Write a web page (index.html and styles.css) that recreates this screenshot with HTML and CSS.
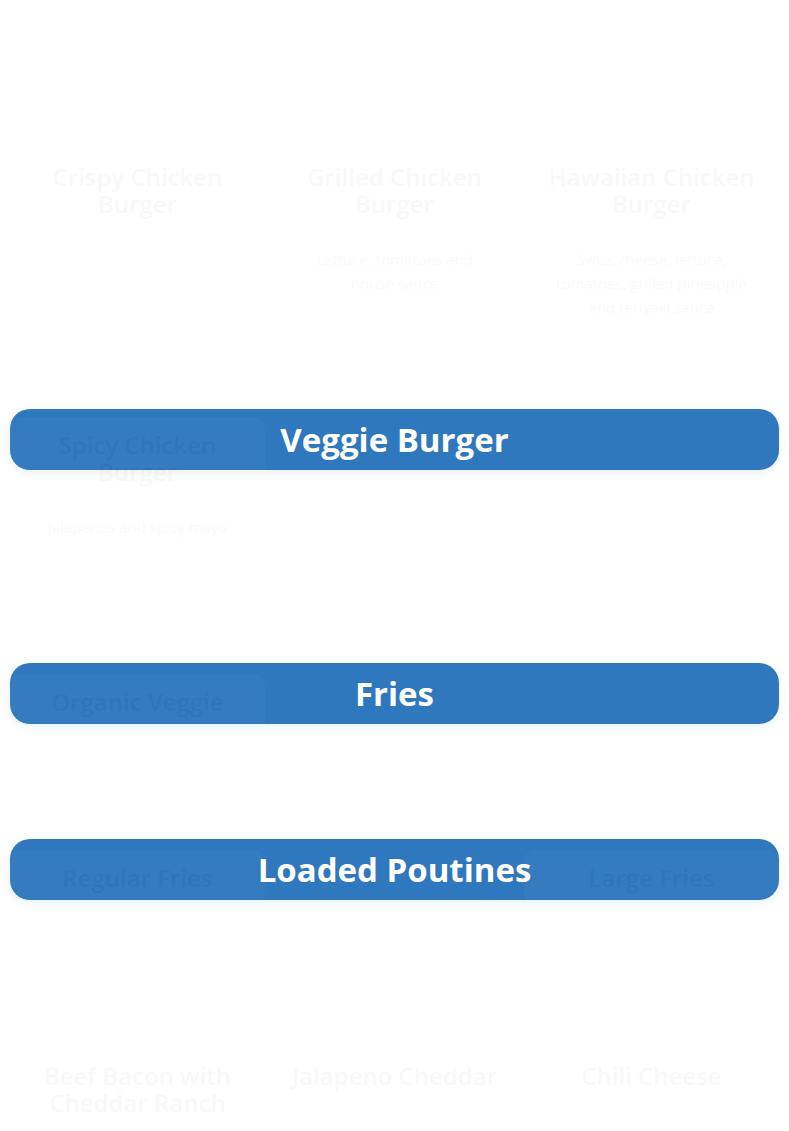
FILE: index.html
```html
<!DOCTYPE html>
<html lang="en">
<head>
    <meta charset="UTF-8">
    <meta name="viewport" content="width=device-width, initial-scale=1.0">
    <title>Menu</title>
    <link rel="stylesheet" href="styles.css">
</head>
<body>
    <div class="menu">

        <section class="menu-section first">
            <div class="menu-grid">
                <div class="item lag-a">
                    <h3 class="item-name">Crispy Chicken Burger</h3>
                    <p class="item-desc"></p>
                </div>
                <div class="item lag-a">
                    <h3 class="item-name">Grilled Chicken Burger</h3>
                    <p class="item-desc">Lettuce, tomatoes and house sauce</p>
                </div>
                <div class="item lag-a">
                    <h3 class="item-name">Hawaiian Chicken Burger</h3>
                    <p class="item-desc">Swiss cheese, lettuce, tomatoes, grilled pineapple and teriyaki sauce</p>
                </div>
                <div class="item lag-b">
                    <h3 class="item-name">Spicy Chicken Burger</h3>
                    <p class="item-desc">Jalapenos and spicy mayo</p>
                </div>
            </div>
        </section>

        <section class="menu-section">
            <h2 class="category">Veggie Burger</h2>
            <div class="menu-grid">
                <div class="item lag-b">
                    <h3 class="item-name">Organic Veggie</h3>
                    <p class="item-desc faded">Veggie patty, lettuce, tomatoes and onions</p>
                </div>
            </div>
        </section>

        <section class="menu-section">
            <h2 class="category">Fries</h2>
            <div class="menu-grid">
                <div class="item lag-c">
                    <h3 class="item-name">Regular Fries</h3>
                </div>
                <div class="item waiting">
                    <h3 class="item-name">Medium Fries</h3>
                </div>
                <div class="item lag-c">
                    <h3 class="item-name">Large Fries</h3>
                </div>
            </div>
        </section>

        <section class="menu-section">
            <h2 class="category">Loaded Poutines</h2>
            <div class="menu-grid">
                <div class="item lag-d">
                    <h3 class="item-name">Beef Bacon with Cheddar Ranch</h3>
                </div>
                <div class="item lag-d">
                    <h3 class="item-name">Jalapeno Cheddar</h3>
                </div>
                <div class="item lag-d">
                    <h3 class="item-name">Chili Cheese</h3>
                </div>
            </div>
        </section>

    </div>
</body>
</html>
```

FILE: styles.css
```css
body {
    font-family: 'Open Sans', 'Liberation Sans', sans-serif;
    background-color: #ffffff;
    margin: 0;
}

.menu {
    padding: 29px 10px 240px;
}

.menu-section {
    margin-bottom: 44px;
}

.category {
    margin: 0 0 16px;
    height: 61px;
    line-height: 61px;
    background: #3078be;
    color: white;
    text-align: center;
    font-size: 33px;
    font-weight: 700;
    border-radius: 20px;
    box-shadow: 0 3px 10px rgba(48, 120, 190, 0.1);
}

.menu-grid {
    display: grid;
    grid-template-columns: repeat(3, 1fr);
    column-gap: 2px;
    row-gap: 16px;
}

.item {
    position: relative;
    z-index: 1;
    background: white;
    border-radius: 12px;
    padding: 14px 16px;
    text-align: center;
    opacity: 0.025;
}

.item.waiting {
    opacity: 0;
}

.lag-a { transform: translateY(120px); }
.lag-b { transform: translateY(188px); }
.lag-c { transform: translateY(110px); }
.lag-d { transform: translateY(132px); }

.item-name {
    margin: 0;
    color: #222;
    font-size: 24px;
    line-height: 27px;
    font-weight: 600;
}

.item-desc {
    margin: 30px 0 0;
    padding: 0 10px;
    color: #444;
    font-size: 15px;
    line-height: 24px;
}

.item-desc:empty {
    display: none;
}

.item-desc.faded {
    visibility: hidden;
}
```
